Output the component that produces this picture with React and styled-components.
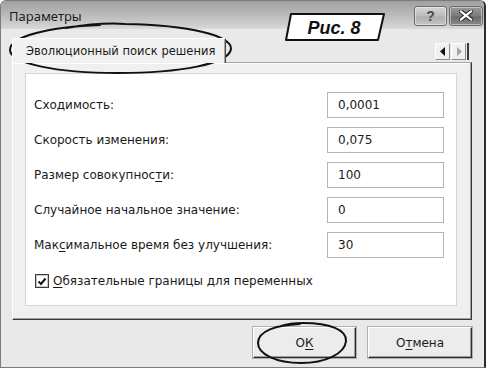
import styled, { createGlobalStyle } from "styled-components";

const GlobalStyle = createGlobalStyle`
  * { box-sizing: border-box; }
  body {
    margin: 0;
    background: #ffffff;
    font-family: "DejaVu Sans", "Liberation Sans", sans-serif;
  }
`;

const Window = styled.div`
  position: relative;
  width: 486px;
  height: 368px;
  display: flex;
  flex-direction: column;
  background: #e9e9e9;
  border: 1px solid #7c7c7c;
  border-right: 2px solid #2c2c2c;
  border-radius: 6px 6px 0 0;
  overflow: hidden;
`;

const TitleBar = styled.div`
  height: 28px;
  display: flex;
  align-items: center;
  padding: 0 1px 0 8px;
  background: linear-gradient(#a0a0a0, #b8b8b8 45%, #cecece 85%, #dadada);
`;

const Title = styled.div`
  flex: 1;
  font-family: "Noto Sans", "DejaVu Sans", sans-serif;
  font-size: 13px;
  color: #1c1c1c;
  padding-top: 1px;
`;

const CaptionButtons = styled.div`
  display: flex;
  gap: 2px;
  margin-top: 1px;
`;

const CaptionButton = styled.div`
  width: ${(p) => p.$w}px;
  height: 20px;
  display: flex;
  align-items: center;
  justify-content: center;
  border: 1px solid #6c6c6c;
  border-radius: 3px;
  background: ${(p) =>
    p.$dark
      ? "linear-gradient(#9a9a9a, #7a7a7a 50%, #6a6a6a 55%, #8a8a8a)"
      : "linear-gradient(#d6d6d6, #bcbcbc 50%, #aeaeae 55%, #c4c4c4)"};
  box-shadow: inset 0 0 0 1px rgba(255, 255, 255, 0.45);
  font-family: "Liberation Sans", sans-serif;
  font-weight: bold;
  font-size: 14px;
  color: #4a4a4a;
`;

const Client = styled.div`
  flex: 1;
  display: flex;
  flex-direction: column;
  padding: 9px 12px 0 11px;
`;

const TabStrip = styled.div`
  height: 24px;
  display: flex;
  align-items: flex-end;
`;

const Tab = styled.div`
  width: 214px;
  height: 25px;
  margin-bottom: -1px;
  position: relative;
  z-index: 1;
  display: flex;
  align-items: center;
  padding: 0 0 0 13px;
  background: #f1f1f1;
  border-top: 1px solid #ffffff;
  border-left: 1px solid #ffffff;
  border-right: 1px solid #4a4a4a;
  box-shadow: inset -1px 0 #a8a8a8;
  font-size: 11.5px;
  color: #1a1a1a;
`;

const StripRest = styled.div`
  flex: 1;
  align-self: stretch;
  display: flex;
  justify-content: flex-end;
  align-items: flex-end;
  padding-bottom: 2px;
`;

const ArrowGroup = styled.div`
  display: flex;
  gap: 1px;
  margin-right: 3px;
  border-right: 2px solid #3a3a3a;
  padding-right: 1px;
`;

const ArrowButton = styled.div`
  width: 15px;
  height: 17px;
  display: flex;
  align-items: center;
  justify-content: center;
  background: #f0f0f0;
  border-top: 1px solid #ffffff;
  border-left: 1px solid #ffffff;
  border-right: 1px solid #8c8c8c;
  border-bottom: 1px solid #8c8c8c;
`;

const TabPage = styled.div`
  height: 258px;
  padding: 10px 14px 13px 12px;
  background: #f0f0f0;
  border-top: 1px solid #a4a4a4;
  border-left: 1px solid #ffffff;
  border-right: 1px solid #3a3a3a;
  border-bottom: 1px solid #3a3a3a;
  box-shadow: inset -1px -1px #a0a0a0, inset 0 1px #ffffff;
`;

const Panel = styled.div`
  height: 100%;
  display: flex;
  flex-direction: column;
  gap: 9px;
  padding: 18px 12px 0 8px;
  background: #ffffff;
  border: 1px solid #d6d6d6;
`;

const Row = styled.div`
  height: 26px;
  display: flex;
  align-items: center;
  justify-content: space-between;
`;

const Label = styled.span`
  font-size: 12px;
  color: #1a1a1a;
`;

const Key = styled.span`
  text-decoration: underline;
  text-underline-offset: 2px;
`;

const Field = styled.div`
  width: 117px;
  height: 26px;
  display: flex;
  align-items: center;
  padding-left: 10px;
  border: 1px solid #b4b4b4;
  background: #ffffff;
  font-size: 12px;
  color: #1a1a1a;
`;

const CheckRow = styled.div`
  display: flex;
  align-items: center;
  gap: 4px;
  margin-top: 7px;
  padding-left: 1px;
  font-size: 12px;
  color: #1a1a1a;
`;

const CheckBox = styled.div`
  width: 14px;
  height: 14px;
  display: flex;
  align-items: center;
  justify-content: center;
  border: 1px solid #3a3a3a;
  box-shadow: inset 0 0 0 1px #c8c8c8;
  background: #ffffff;
`;

const ButtonRow = styled.div`
  flex: 1;
  display: flex;
  justify-content: flex-end;
  gap: 12px;
  padding-top: 7px;
`;

const Button = styled.div`
  width: ${(p) => p.$w}px;
  height: 31px;
  display: flex;
  align-items: center;
  justify-content: center;
  background: #ececec;
  border-top: 1px solid #ffffff;
  border-left: 1px solid #ffffff;
  border-right: 1px solid #2e2e2e;
  border-bottom: 1px solid #2e2e2e;
  box-shadow: inset -1px -1px #9c9c9c, 0 0 0 1px #b0b0b0;
  font-size: 12px;
  color: #1a1a1a;
`;

const Overlay = styled.svg`
  position: absolute;
  left: -1px;
  top: -1px;
  pointer-events: none;
  overflow: visible;
`;

const FigLabel = styled.text`
  font-family: "Liberation Sans", Arial, sans-serif;
  font-weight: bold;
  font-style: italic;
  font-size: 18px;
  fill: #111111;
`;

const fields = [
  { label: "Сходимость:", value: "0,0001" },
  { label: "Скорость изменения:", value: "0,075" },
  {
    label: (
      <>
        Размер совокупнос<Key>т</Key>и:
      </>
    ),
    value: "100",
  },
  { label: "Случайное начальное значение:", value: "0" },
  {
    label: (
      <>
        Мак<Key>с</Key>имальное время без улучшения:
      </>
    ),
    value: "30",
  },
];

export default function App() {
  return (
    <>
      <GlobalStyle />
      <Window>
        <TitleBar>
          <Title>Параметры</Title>
          <CaptionButtons>
            <CaptionButton $w={33}>?</CaptionButton>
            <CaptionButton $w={34} $dark>
              <svg width="14" height="11" viewBox="0 0 14 11">
                <path d="M2 1.5 L12 9.5 M12 1.5 L2 9.5" stroke="#2a2a2a" strokeWidth="4.2" strokeLinecap="square" />
                <path d="M2 1.5 L12 9.5 M12 1.5 L2 9.5" stroke="#ffffff" strokeWidth="2.2" strokeLinecap="square" />
              </svg>
            </CaptionButton>
          </CaptionButtons>
        </TitleBar>

        <Client>
          <TabStrip>
            <Tab>Эволюционный поиск решения</Tab>
            <StripRest>
              <ArrowGroup>
                <ArrowButton>
                  <svg width="6" height="9" viewBox="0 0 6 9">
                    <path d="M5 0 L0 4.5 L5 9 Z" fill="#111111" />
                  </svg>
                </ArrowButton>
                <ArrowButton>
                  <svg width="6" height="9" viewBox="0 0 6 9">
                    <path d="M1 0 L6 4.5 L1 9 Z" fill="#a6a6a6" />
                  </svg>
                </ArrowButton>
              </ArrowGroup>
            </StripRest>
          </TabStrip>

          <TabPage>
            <Panel>
              {fields.map((f, i) => (
                <Row key={i}>
                  <Label>{f.label}</Label>
                  <Field>{f.value}</Field>
                </Row>
              ))}
              <CheckRow>
                <CheckBox>
                  <svg width="10" height="9" viewBox="0 0 10 9">
                    <path d="M1.5 4.5 L4 7 L8.5 1.5" stroke="#111111" strokeWidth="2" fill="none" />
                  </svg>
                </CheckBox>
                <span>
                  <Key>О</Key>бязательные границы для переменных
                </span>
              </CheckRow>
            </Panel>
          </TabPage>

          <ButtonRow>
            <Button $w={103}>
              <span>
                О<Key>К</Key>
              </span>
            </Button>
            <Button $w={104}>
              <span>
                О<Key>т</Key>мена
              </span>
            </Button>
          </ButtonRow>
        </Client>

        <Overlay width="489" height="374" viewBox="0 0 489 374">
          <path
            d="M291 14 L384 14 L378 40 L286 40 Z"
            fill="#ffffff"
            stroke="#111111"
            strokeWidth="2"
            strokeLinejoin="round"
          />
          <FigLabel x="334" y="34" textAnchor="middle">
            Рис. 8
          </FigLabel>
          <g fill="none" stroke="#111111" strokeWidth="2" strokeLinecap="round">
            <path d="M66 28 C 90 24, 110 23, 125 24 C 190 25, 232 36, 231 49 C 229 64, 180 73, 118 73 C 55 73, 10 63, 10 50 C 10 36, 50 27, 100 25" />
            <path d="M281 326 C 290 323, 298 323, 303 323 C 330 323, 347 330, 346 341 C 345 354, 325 363, 301 363 C 276 363, 258 354, 258 343 C 258 331, 276 325, 300 324" />
          </g>
        </Overlay>
      </Window>
    </>
  );
}
